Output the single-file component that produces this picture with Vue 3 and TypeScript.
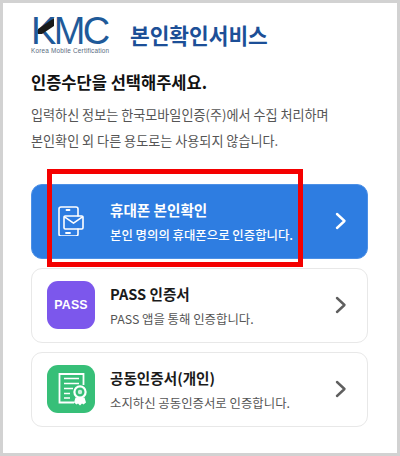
<script setup lang="ts">
interface Method {
  id: string
  title: string
  desc: string
  active?: boolean
}

const methods: Method[] = [
  { id: 'phone', title: '휴대폰 본인확인', desc: '본인 명의의 휴대폰으로 인증합니다.', active: true },
  { id: 'pass', title: 'PASS 인증서', desc: 'PASS 앱을 통해 인증합니다.' },
  { id: 'cert', title: '공동인증서(개인)', desc: '소지하신 공동인증서로 인증합니다.' },
]
</script>

<template>
  <div class="frame">
    <div class="page">
      <header class="header">
        <div class="logo">
          <div class="logo-mark">
            <span class="logo-k">K</span><span>MC</span>
            <svg class="logo-wedge" viewBox="0 0 20 22" aria-hidden="true">
              <polygon points="4,11 20,0 20,8 8,16 4,16" fill="#1a1a1a" />
            </svg>
          </div>
          <div class="logo-sub">Korea Mobile Certification</div>
        </div>
        <h1 class="service">본인확인서비스</h1>
      </header>

      <h2 class="heading">인증수단을 선택해주세요.</h2>
      <p class="desc">입력하신 정보는 한국모바일인증(주)에서 수집 처리하며<br />본인확인 외 다른 용도로는 사용되지 않습니다.</p>

      <div class="list">
        <div v-for="m in methods" :key="m.id" class="card" :class="{ active: m.active }">
          <div class="icon" :class="'icon-' + m.id">
            <svg v-if="m.id === 'phone'" class="phone" viewBox="0 0 26 30" fill="none" stroke="#fff" stroke-width="1.6" stroke-linejoin="round" stroke-linecap="round">
              <path d="M20 10V3a2 2 0 0 0-2-2H3a2 2 0 0 0-2 2v25a2 2 0 0 0 2 2h15a2 2 0 0 0 2-2v-5" />
              <path d="M8.5 4h3M8 27h4" stroke-width="1.8" />
              <rect x="6" y="10" width="19" height="13" rx="1.2" />
              <path d="M6.5 10.8l9 6.4 9-6.4" />
            </svg>
            <span v-else-if="m.id === 'pass'" class="pass-text">PASS</span>
            <svg v-else class="cert" viewBox="0 0 34 36" fill="none" stroke="#fff" stroke-width="1.8">
              <path d="M20 31.5H5.5V3H29.5V14" />
              <path d="M10 7.5h15M10 12.5h15M10 17.5h9M10 22.5h6M10 27h6" stroke-width="1.6" />
              <circle cx="26" cy="21" r="5.6" stroke-width="2.2" />
              <circle cx="26" cy="21" r="2.2" fill="#fff" fill-opacity="0.75" stroke="none" />
              <path d="M21.5 26.5l-1.5 5 2.5 2 1.5-1 2 2 2-2 1.5 1 2.5-2-1.5-5z" fill="#fff" stroke="none" />
            </svg>
          </div>
          <div class="text">
            <div class="title">{{ m.title }}</div>
            <div class="sub">{{ m.desc }}</div>
          </div>
          <svg class="chev" viewBox="0 0 12 18" fill="none" stroke-width="2.4" stroke-linecap="round" stroke-linejoin="round">
            <path d="M2 2l7.5 7L2 16" />
          </svg>
        </div>
      </div>

      <div class="highlight"></div>
    </div>
  </div>
</template>

<style>
html,
body {
  margin: 0;
  background: #fff;
}
</style>

<style scoped>
.frame {
  box-sizing: border-box;
  width: 400px;
  height: 456px;
  border: 3px solid #d2d2d2;
  background: #fff;
  font-family: 'Noto Sans CJK KR', 'Noto Sans', sans-serif;
}

.page {
  position: relative;
  box-sizing: border-box;
  height: 100%;
  padding: 12px 29px 0 28px;
}

.header {
  display: flex;
  align-items: center;
  gap: 21px;
  height: 42px;
}

.logo {
  width: 78px;
  color: #1f5a99;
}

.logo-mark {
  position: relative;
  font-family: 'Liberation Sans', sans-serif;
  font-size: 38px;
  line-height: 29px;
  height: 30px;
  letter-spacing: -2.6px;
  white-space: nowrap;
}

.logo-wedge {
  position: absolute;
  left: 3px;
  top: 1px;
  width: 20px;
  height: 22px;
}

.logo-sub {
  font-family: 'Liberation Sans', sans-serif;
  font-size: 6.4px;
  line-height: 8px;
  color: #5b6d80;
  letter-spacing: 0.2px;
  white-space: nowrap;
}

.service {
  margin: 0 0 3px;
  font-size: 21.4px;
  line-height: 30px;
  font-weight: 700;
  color: #1c4f97;
  white-space: nowrap;
}

.heading {
  margin: 12px 0 0;
  font-size: 16.5px;
  line-height: 26px;
  font-weight: 700;
  color: #111;
  white-space: nowrap;
}

.desc {
  margin: 7px 0 0;
  font-size: 13.1px;
  line-height: 26px;
  color: #555;
  white-space: nowrap;
}

.list {
  display: flex;
  flex-direction: column;
  gap: 8.5px;
  margin-top: 29.5px;
}

.card {
  box-sizing: border-box;
  display: flex;
  align-items: center;
  height: 75.5px;
  padding: 0 20px 0 15px;
  background: #fff;
  border: 1px solid #e8e8e8;
  border-radius: 11px;
}

.card.active {
  background: #2e7de1;
  border-color: #4d90e6;
}

.icon {
  flex: none;
  display: flex;
  align-items: center;
  justify-content: center;
  width: 48px;
  height: 48px;
  border-radius: 11px;
}

.icon-pass {
  background: #7c57ec;
}

.icon-cert {
  background: #37bf78;
}

.phone {
  width: 26px;
  height: 30px;
}

.cert {
  width: 34px;
  height: 36px;
}

.pass-text {
  font-family: 'Liberation Sans', sans-serif;
  font-size: 12.4px;
  font-weight: 700;
  color: #fff;
  letter-spacing: 0.2px;
}

.text {
  flex: 1;
  min-width: 0;
  margin-left: 15px;
}

.title {
  font-size: 14.6px;
  line-height: 22px;
  font-weight: 700;
  color: #1a1a1a;
  white-space: nowrap;
}

.sub {
  margin-top: 5px;
  font-size: 12.4px;
  line-height: 18px;
  color: #555;
  white-space: nowrap;
}

.active .title,
.active .sub {
  color: #fff;
}

.active .sub {
  font-weight: 500;
}

.chev {
  flex: none;
  width: 12px;
  height: 18px;
  stroke: #5f5f5f;
}

.active .chev {
  stroke: #fff;
}

.highlight {
  position: absolute;
  left: 44px;
  top: 166px;
  box-sizing: border-box;
  width: 256px;
  height: 98px;
  border: 5px solid #f40000;
  pointer-events: none;
}
</style>
